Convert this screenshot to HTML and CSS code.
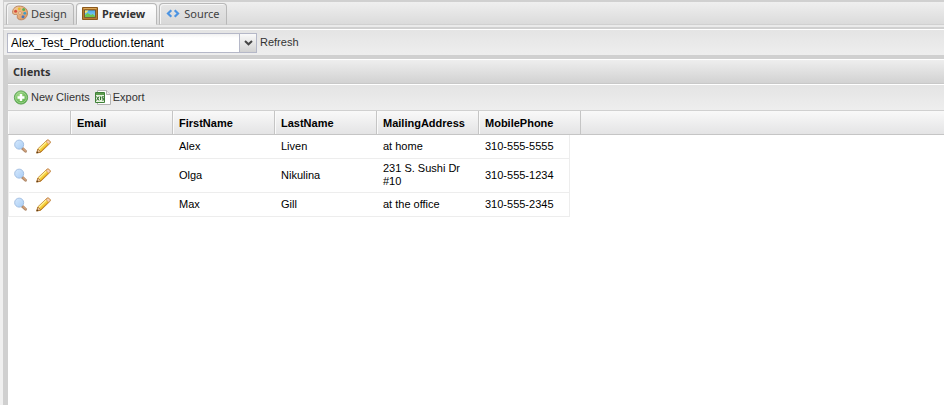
FILE: index.html
```html
<!DOCTYPE html>
<html lang="en">
<head>
<meta charset="utf-8">
<title>Clients</title>
<link rel="stylesheet" href="styles.css">
</head>
<body>
<svg class="defs" aria-hidden="true">
  <defs>
    <linearGradient id="lens" x1="0" y1="0" x2="1" y2="1">
      <stop offset="0" stop-color="#d6e9fd"/><stop offset="1" stop-color="#a9cdf5"/>
    </linearGradient>
    <linearGradient id="sky" x1="0" y1="0" x2="0" y2="1">
      <stop offset="0" stop-color="#4aa9ec"/><stop offset="1" stop-color="#8ed2f5"/>
    </linearGradient>
    <radialGradient id="green" cx=".4" cy=".35" r=".7">
      <stop offset="0" stop-color="#a5dc8c"/><stop offset="1" stop-color="#4fa83f"/>
    </radialGradient>
    <linearGradient id="wood" x1="0" y1="0" x2="1" y2="1">
      <stop offset="0" stop-color="#f6d3a6"/><stop offset="1" stop-color="#d8925a"/>
    </linearGradient>
    <symbol id="view" viewBox="0 0 16 16">
      <path d="M9 10l3.300 3" stroke="#b08a6c" stroke-width="3" stroke-linecap="round"/>
      <path d="M10 10.500l2.300 2.200" stroke="#dba77c" stroke-width="1.200" stroke-linecap="round"/>
      <circle cx="5.500" cy="6" r="4.800" fill="url(#lens)" stroke="#9fbce0"/>
    </symbol>
    <symbol id="edit" viewBox="0 0 16 16">
      <path d="M.700 15l1.300-4.500L11.500 1.500q1-.900 2.200-.200l1.200 1.300q.800 1.200-.200 2.200L5.200 14z" fill="#f5cf3b" stroke="#ba7a2c"/>
      <path d="M2.500 11.500L11 3.200" stroke="#fff199" stroke-width="1.400"/>
      <path d="M4.700 13.300L13.300 5" stroke="#dda422"/>
      <path d="M10.700 2.700l1.300-1.200q.900-.700 1.700 0l1 1.100q.700.900 0 1.800l-1.200 1.200z" fill="#f6d0b4" stroke="#c58050" stroke-width=".600"/>
      <path d="M1 14.700l1.200-4 2.900 3z" fill="#efc9a0" stroke="#a0692b" stroke-width=".700"/>
      <path d="M.500 15.300l.700-2.300 1.500 1.600z" fill="#53391e"/>
    </symbol>
  </defs>
</svg>
<main class="editor">
  <nav class="tabs">
    <button type="button" class="tab">
      <svg class="icon" viewBox="0 0 16 16" aria-hidden="true">
        <path d="M8.500 1.200C4 .500.500 3.500.600 7.200c0 2 1.600 2.500 3 2.300 1.500-.200 2 .500 1.700 1.800-.400 2 1.100 3.700 4 3.500 3.800-.200 6.300-3.300 6.200-7.300-.100-3.600-3.100-5.800-7-6.300z" fill="url(#wood)" stroke="#b97c54" stroke-width=".900"/>
        <circle cx="3.600" cy="6.200" r="1.500" fill="#d7503f"/>
        <circle cx="7.300" cy="3.800" r="1.400" fill="#e7bb27"/>
        <circle cx="11.700" cy="4.600" r="1.500" fill="#5eaf51"/>
        <circle cx="12.800" cy="8.300" r="1.400" fill="#3d9cca"/>
        <circle cx="11" cy="11.700" r="1.500" fill="#4975bd"/>
        <circle cx="8" cy="8" r="1.300" fill="#fff0dc" stroke="#b77b50" stroke-width=".600"/>
      </svg>
      <span>Design</span>
    </button>
    <button type="button" class="tab tab-active">
      <svg class="icon" viewBox="0 0 16 16" aria-hidden="true">
        <path d="M.500 2.500h15v12H.500z" fill="#b77b2c" stroke="#8c581b"/>
        <path d="M1.500 3.500h13" stroke="#dba858"/>
        <path d="M2.500 5h11v7.500h-11z" fill="url(#sky)" stroke="#6f4a1d" stroke-width=".800"/>
        <path d="M3 12v-2l2.500-2 3.500 2 1.500-1 2.500 1.800V12z" fill="#6fc64c"/>
        <path d="M3 5.500h3.500L4.800 7.500 3 8.200z" fill="#f4e671"/>
      </svg>
      <span>Preview</span>
    </button>
    <button type="button" class="tab">
      <svg class="icon" viewBox="0 0 16 16" aria-hidden="true">
        <path d="M6.300 5.300L3 8.500l3.300 3.200M9.700 5.300L13 8.500l-3.300 3.200" fill="none" stroke="#4c94e2" stroke-width="2.200"/>
      </svg>
      <span>Source</span>
    </button>
  </nav>
  <div class="tab-strip"></div>
  <div class="toolbar source-bar">
    <div class="combo">
      <select aria-label="Tenant"><option>Alex_Test_Production.tenant</option></select>
      <span class="trigger"><svg viewBox="0 0 9 6" aria-hidden="true"><path d="M1 1l3.500 3.300L8 1" fill="none" stroke="#444" stroke-width="2"/></svg></span>
    </div>
    <button type="button" class="action">Refresh</button>
  </div>
  <section class="panel">
    <h1 class="panel-title">Clients</h1>
    <div class="toolbar panel-bar">
      <button type="button" class="action">
        <svg class="icon" viewBox="0 0 16 16" aria-hidden="true">
          <circle cx="8" cy="7.500" r="6.600" fill="url(#green)" stroke="#5fa657"/>
          <circle cx="8" cy="7.500" r="5.400" fill="none" stroke="#b5dfa4" stroke-width=".700"/>
          <path d="M8 4v7M4.500 7.500h7" stroke="#fff" stroke-width="2.400"/>
        </svg>
        <span>New Clients</span>
      </button>
      <button type="button" class="action">
        <svg class="icon" viewBox="0 0 16 16" aria-hidden="true">
          <path d="M2.500.500h9l4 4v10h-13z" fill="#fff" stroke="#b3b3b3"/>
          <path d="M11.500.500v4h4" fill="#eee" stroke="#b3b3b3"/>
          <path d="M.500 2.500h9v10h-9z" fill="#e8f3e0" stroke="#3f8138"/>
          <path d="M1 3h8v2H1z" fill="#5d9c50"/>
          <path d="M1.500 6.500l2.500 4M4 6.500l-2.500 4M5.500 6.500v3.500M8.800 6.700H7.200v1.600h1.600v1.700H7" stroke="#2f702c" fill="none"/>
        </svg>
        <span>Export</span>
      </button>
    </div>
    <table class="grid">
      <colgroup><col class="c-tools"><col class="c-data"><col class="c-data"><col class="c-data"><col class="c-data"><col class="c-phone"><col class="c-edge"><col></colgroup>
      <thead>
        <tr><th aria-label="Actions"></th><th>Email</th><th>FirstName</th><th>LastName</th><th>MailingAddress</th><th colspan="2">MobilePhone</th><td class="rest"></td></tr>
      </thead>
      <tbody>
        <tr>
          <td class="tools"><div class="row-tools"><button type="button" aria-label="View"><svg class="row-icon"><use href="#view"/></svg></button><button type="button" aria-label="Edit"><svg class="row-icon"><use href="#edit"/></svg></button></div></td>
          <td></td><td>Alex</td><td>Liven</td><td>at home</td><td class="last">310-555-5555</td>
        </tr>
        <tr>
          <td class="tools"><div class="row-tools"><button type="button" aria-label="View"><svg class="row-icon"><use href="#view"/></svg></button><button type="button" aria-label="Edit"><svg class="row-icon"><use href="#edit"/></svg></button></div></td>
          <td></td><td>Olga</td><td>Nikulina</td><td>231 S. Sushi Dr #10</td><td class="last">310-555-1234</td>
        </tr>
        <tr>
          <td class="tools"><div class="row-tools"><button type="button" aria-label="View"><svg class="row-icon"><use href="#view"/></svg></button><button type="button" aria-label="Edit"><svg class="row-icon"><use href="#edit"/></svg></button></div></td>
          <td></td><td>Max</td><td>Gill</td><td>at the office</td><td class="last">310-555-2345</td>
        </tr>
      </tbody>
    </table>
  </section>
</main>
</body>
</html>
```
FILE: styles.css
```css
* { box-sizing: border-box; }

body {
  margin: 0;
  background: #f0f0f0;
  color: #000;
  font: 11px/13px "Liberation Sans", Arial, sans-serif;
}

button {
  margin: 0;
  padding: 0;
  border: 0;
  background: none;
  color: inherit;
  font: inherit;
}

.defs { position: absolute; width: 0; height: 0; }
.icon { display: block; flex: none; width: 16px; height: 16px; }
.row-icon { display: block; width: 15px; height: 15px; }

.editor {
  display: flex;
  flex-direction: column;
  min-height: 100vh;
  margin-left: 3px;
}

/* Tabs */
.tabs {
  display: flex;
  align-items: flex-end;
  gap: 2px;
  height: 25px;
  padding-left: 2px;
  border-top: 2px solid #d0d0d0;
  border-left: 1px solid #d0d0d0;
  background: linear-gradient(#efefef, #dadada);
  box-shadow: inset 0 -1px #d0d0d0;
}

.tab {
  display: flex;
  align-items: center;
  gap: 3px;
  min-width: 68px;
  height: 22px;
  padding: 0 6px 2px 5px;
  border: 1px solid #b8b8b8;
  border-bottom-color: #d0d0d0;
  border-radius: 4px 4px 0 0;
  background: linear-gradient(#e6e6e6, #d8d8d8);
  box-shadow: inset 1px 1px #f6f6f6;
  color: #414141;
  font-family: "Noto Sans", Tahoma, sans-serif;
}

.tab-active {
  gap: 4px;
  padding-right: 11px;
  border-bottom-color: #eee;
  background: linear-gradient(#fff, #eee);
  color: #333;
  font-weight: bold;
}

.tab-strip {
  height: 4px;
  border-bottom: 2px solid #d0d0d0;
  border-left: 1px solid #d0d0d0;
  background: #eaeaea;
}

/* Toolbars */
.toolbar {
  display: flex;
  align-items: center;
  height: 26px;
  border-top: 1px solid #fff;
  background: linear-gradient(#e4e4e4, #eee);
  color: #333;
}

.source-bar {
  gap: 3px;
  padding-left: 3px;
  border-left: 1px solid #d0d0d0;
}

.panel-bar {
  gap: 5px;
  height: 27px;
  padding-left: 5px;
  border-bottom: 1px solid #d0d0d0;
}

.action { display: flex; align-items: center; gap: 2px; }

.combo {
  display: flex;
  width: 250px;
  height: 20px;
  border: 1px solid #b5b8c8;
  background: #fff;
}

.combo select {
  flex: 1;
  min-width: 0;
  padding: 1px 3px 0;
  border: 0;
  appearance: none;
  background: linear-gradient(#f2f2f2, #fff 4px);
  color: #000;
  font: 12px/17px "Liberation Sans", Arial, sans-serif;
}

.trigger {
  display: grid;
  place-items: center;
  width: 17px;
  border-left: 1px solid #b5b8c8;
  background: linear-gradient(#fafafa, #d2d2d2);
  pointer-events: none;
}

.trigger svg { width: 9px; height: 6px; }

/* Clients panel */
.panel {
  flex: 1;
  border-top: 4px solid #d0d0d0;
  border-left: 5px solid #d0d0d0;
  background: #fff;
}

.panel-title {
  height: 25px;
  margin: 0;
  padding-left: 5px;
  border-top: 1px solid #fff;
  border-bottom: 1px solid #c8c8c8;
  background: linear-gradient(#eee, #d2d2d2);
  color: #333;
  font: bold 11px/23px "Noto Sans", Tahoma, sans-serif;
}

/* Data grid */
.grid {
  width: 100%;
  table-layout: fixed;
  border-collapse: separate;
  border-spacing: 0;
}

.c-tools { width: 63px; }
.c-data { width: 102px; }
.c-phone { width: 91px; }
.c-edge { width: 11px; }

.grid thead tr { background: linear-gradient(#f9f9f9, #e3e3e4); }

.grid th,
.grid .rest {
  height: 24px;
  padding: 2px 6px 0;
  border-bottom: 1px solid #c5c5c5;
  text-align: left;
  white-space: nowrap;
}

.grid th {
  border-right: 1px solid #c5c5c5;
  box-shadow: inset 1px 0 #fafafa;
}

.grid tbody td {
  height: 24px;
  padding: 3px 6px 4px;
  border-bottom: 1px solid #ededed;
  vertical-align: middle;
}

.grid tbody .tools { padding-left: 5px; border-left: 1px solid #ededed; }
.grid tbody .last { border-right: 1px solid #ededed; }

.row-tools { display: flex; gap: 7px; }
```
